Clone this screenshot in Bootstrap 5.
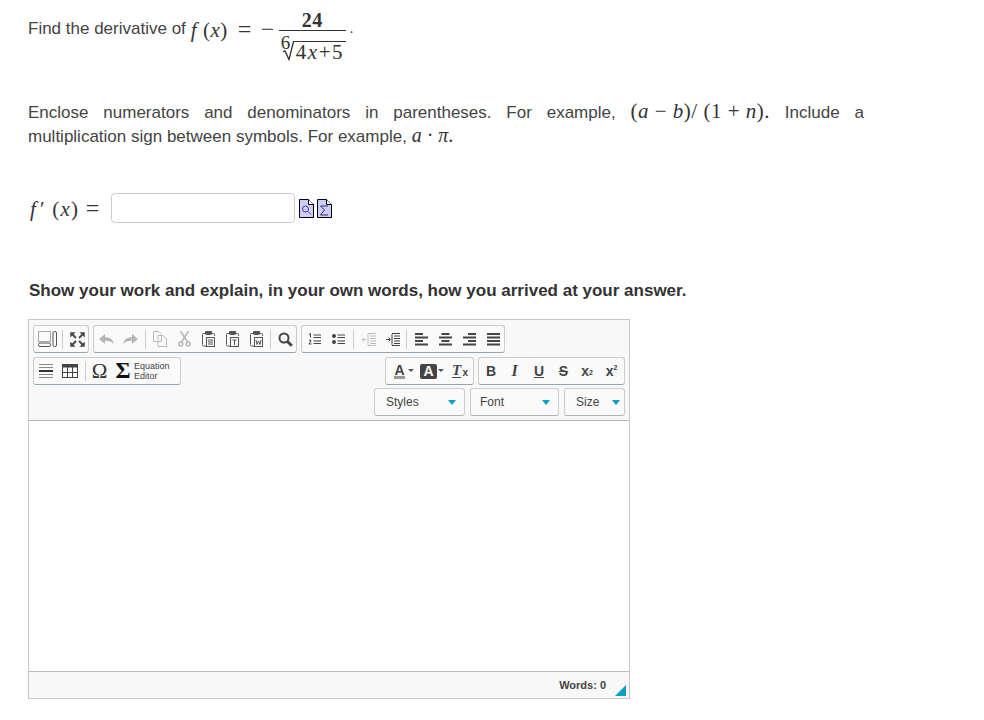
<!DOCTYPE html>
<html lang="en"><head><meta charset="utf-8"><title>Derivative question</title>
<link href="https://cdn.jsdelivr.net/npm/bootstrap@5.3.0/dist/css/bootstrap.min.css" rel="stylesheet">
<style>
html,body{height:720px;overflow:hidden}
body{font-family:"Liberation Sans",Arial,sans-serif;font-size:17px;color:#444;padding:0 0 0 28px;background:#fff}
svg{display:block}
.mth{font-family:"Liberation Serif",serif;font-size:21px;color:#333;white-space:nowrap;line-height:1;letter-spacing:.5px}
.mth i{font-style:italic}
.q-line{padding-top:9px;height:62px}
.q-txt{padding-top:8px;line-height:24px}
.q-math{padding-top:8px;line-height:24px;font-size:21px}
.q-sl{display:inline-block}
.q-f{width:47px;margin-left:5px}
.q-eq{width:23px;font-size:24px}
.q-mi{width:18px;font-size:24px}
.q-frac{width:67px;position:relative}
.q-num{height:22px;line-height:23px;border-bottom:1.5px solid #333;text-align:center;font-weight:bold;font-size:20px}
.q-den{position:relative;height:32px;padding-left:14px;font-size:21px}
.q-den svg{position:absolute;left:0;top:0}
.q-den b{font-weight:normal;position:absolute;left:2px;top:2px;font-size:19px;line-height:1.1}
.q-rad{display:block;position:relative;top:10px;border-top:1px solid #333;line-height:20px;padding-left:3px;letter-spacing:1.5px}
.q-dot{font-size:14px;padding-left:4px}
.q-para{width:836px;margin:39px 0 0;line-height:24px;text-align:justify}
.q-inl{display:inline-block}
.q-sp{font-size:20px;letter-spacing:0}
.q-ans{margin-top:44px;height:30px}
.q-fx{width:71px;letter-spacing:1.2px;padding-left:2px}
.q-fx i:first-child{margin-right:3px}
.q-sym{font-size:24px;line-height:1}
.q-inp{width:184px;height:30px;border:1px solid #ccc;border-radius:4px;margin:0 4px 0 12px;padding:0}
.q-pg{margin-right:3px}
.q-show{font-weight:bold;font-size:17px;color:#333;margin:56px 0 0 1px;line-height:24px}
.ed-box{width:602px;height:380px;margin-top:16px;border:1px solid #c8c8c8;background:#f8f8f8}
.ed-bar{height:101px;padding:5px 4px 0 4px;border-bottom:1px solid #b6b6b6}
.ed-r2{margin-bottom:3px}
.ed-grp{height:28px;border:1px solid #ccc;border-bottom-color:#93a7ae;border-radius:3px;background:#fafafa;flex:none;display:flex;align-items:center}
.ed-btn{width:24px;height:26px;flex:none;color:#444;font-size:14px;font-weight:bold;line-height:26px;display:flex;align-items:center;justify-content:center;position:relative}
.ed-sep{width:1px;height:19px;background:#ccc;flex:none;margin:0 3px}
.ed-m22{margin:0 2px}.ed-m32{margin:0 2px 0 3px}.ed-m12{margin:0 2px 0 1px}
.g56{width:56px}.g204{width:204px}.g148{width:148px}.g89{width:89px}.g147{width:147px}
.b23{width:23px}.b25{width:25px}.b26{width:26px}.b27{width:27px;margin-left:4px}.b30{width:30px}
.ed-om{font-family:"Liberation Serif",serif;font-size:21px;font-weight:normal;color:#333}
.ed-si{font-family:"Liberation Serif",serif;font-size:23px;font-weight:bold;color:#111;margin-right:-1px}
.ed-eq{font-size:9px;line-height:10px;font-weight:normal;color:#444;width:46px;padding-left:1px;display:block;height:auto;text-align:left;margin-left:-1px;margin-top:-1px}
.ed-a{border-bottom:3px solid #999;line-height:12px;margin-right:8px}
.ed-ab{background:#444;color:#fff;border-radius:2px;padding:0 3px;line-height:15px;margin-right:7px}
.ed-tc{font-family:"Liberation Serif",serif;font-style:italic;font-size:15px;border-bottom:1px solid #444;line-height:13px;margin-right:5px}
.ed-x{position:absolute;font-size:10px;top:9px;right:3px;line-height:12px}
.ed-car{position:absolute;width:0;height:0;border-left:3px solid transparent;border-right:3px solid transparent;border-top:3px solid #555;top:11px;right:3px}
.ed-i{font-family:"Liberation Serif",serif;font-style:italic;font-size:16px}
.ed-sb{font-size:7px;line-height:0}
.ed-combo{height:28px;border:1px solid #ccc;border-bottom-color:#a9b4b8;border-radius:3px;background:#fafafa;font-size:12px;color:#444;padding-left:11px;padding-right:4px;flex:none}
.ed-combos{gap:5px}
.c91{width:91px}.c89{width:89px;padding-left:9px}.c61{width:61px}
.ed-caret{width:0;height:0;border-left:4.5px solid transparent;border-right:4.5px solid transparent;border-top:5px solid #0a9ec9}
.ed-body{height:251px;background:#fff;border-bottom:1px solid #bdbdbd}
.ed-foot{height:27px;font-size:11px;font-weight:bold;color:#444;padding:0 3px 1px 0}
.ed-grip{width:0;height:0;border-left:11px solid transparent;border-bottom:11px solid #0a9ec9;margin-left:9px;margin-top:11px}
</style></head><body>

<div class="q-line d-flex align-items-start">
  <div class="q-txt">Find the derivative of</div>
  <div class="q-math mth"><span class="q-sl q-f"><i>f</i> (<i>x</i>)</span><span class="q-sl q-eq">=</span><span class="q-sl q-mi">−</span></div>
  <div class="q-frac mth">
    <div class="q-num">24</div>
    <div class="q-den"><svg width="20" height="32" viewBox="0 0 20 32"><path d="M4 21l2-1 4 8.500L14.500 10.500" fill="none" stroke="#333" stroke-width="1.300"/></svg><b>6</b><span class="q-rad">4<i>x</i>+5</span></div>
  </div>
  <div class="q-math mth q-dot">.</div>
</div>

<p class="q-para">Enclose numerators and denominators in parentheses. For example, <span class="mth q-inl">(<i>a</i> − <i>b</i>)/ (1 + <i>n</i>).</span> Include a multiplication sign between symbols. For example, <span class="mth q-inl q-sp"><i>a</i> · <i>π</i>.</span></p>

<div class="q-ans d-flex align-items-center">
  <div class="mth q-fx"><i>f</i>′ (<i>x</i>)&nbsp;<span class="q-sym">=</span></div>
  <input class="q-inp" type="text" aria-label="answer">
  <svg class="q-pg" width="15" height="19" viewBox="0 0 15 19"><path d="M.5.500h9l5 5v13H.5z" fill="#ccf" stroke="#000"/><path d="M9.500.500v5h5" fill="#fff" stroke="#000"/><circle cx="6.500" cy="10" r="3" fill="none" stroke="#446"/><path d="M9 12.500l3 3" stroke="#446"/></svg>
  <svg width="15" height="19" viewBox="0 0 15 19"><path d="M.5.500h9l5 5v13H.5z" fill="#ccf" stroke="#000"/><path d="M9.500.500v5h5" fill="#fff" stroke="#000"/><path d="M11 7H3.500l4 4-4 5H11" fill="none" stroke="#335"/></svg>
</div>

<div class="q-show">Show your work and explain, in your own words, how you arrived at your answer.</div>

<div class="ed-box">
  <div class="ed-bar">
    <div class="d-flex gap-1 mb-1">
      <div class="ed-grp g56">
        <div class="ed-btn b26"><svg width="21" height="18" viewBox="0 0 21 18" fill="none" stroke="#555"><rect x="1.500" y="1.500" width="12" height="10" stroke-dasharray="1 1"/><rect x="1.500" y="13" width="12" height="3.500" rx="1.500"/><rect x="16" y="1.500" width="3.500" height="15" rx="1.500"/></svg></div>
        <div class="ed-sep ed-m22"></div>
        <div class="ed-btn"><svg width="15" height="15" viewBox="0 0 15 15" fill="#444" stroke="#444"><path d="M.5.500h4.500L.5 5zM14.500.500V5L10 .500zM.5 14.500V10L5 14.500zM14.500 14.500H10L14.500 10z" stroke-width=".5"/><path d="M2 2l4 4M13 2L9 6M2 13l4-4M13 13L9 9" stroke-width="1.800"/></svg></div>
      </div>
      <div class="ed-grp g204">
        <div class="ed-btn"><svg width="15" height="11" viewBox="0 0 15 11" fill="#b5b5b5"><path d="M6 0v3.200c5 0 8 2.300 9 7.300-2-3-4.500-3.800-9-3.800V10L0 5z"/></svg></div>
        <div class="ed-btn"><svg width="15" height="11" viewBox="0 0 15 11" fill="#b5b5b5"><path d="M9 0v3.200c-5 0-8 2.300-9 7.300 2-3 4.500-3.800 9-3.800V10l6-5z"/></svg></div>
        <div class="ed-sep ed-m32"></div>
        <div class="ed-btn"><svg width="14" height="16" viewBox="0 0 14 16" fill="none" stroke="#bbb"><path d="M.5.500h5l3 3v7H.5zM5 4.500h5l3.500 3.500v7.500H5z" fill="#fafafa"/></svg></div>
        <div class="ed-btn"><svg width="13" height="16" viewBox="0 0 13 16" fill="none" stroke="#b5b5b5" stroke-width="1.500"><path d="M2.500 0l7 11M10.500 0l-7 11"/><circle cx="2.800" cy="13" r="2"/><circle cx="10.200" cy="13" r="2"/></svg></div>
        <div class="ed-btn"><svg width="13" height="16" viewBox="0 0 13 16" fill="none" stroke="#555"><path d="M4 2.500H1.500q-1 0-1 1v10q0 1.500 1 1.500H4"/><path d="M9 2.500h2.500q1 0 1 1V5"/><rect x="3.500" y="0" width="6" height="3.500" fill="#555" rx="1"/><rect x="4.500" y="6.500" width="8" height="9"/><path d="M6 9h5M6 11h5M6 13h5"/></svg></div>
        <div class="ed-btn"><svg width="13" height="16" viewBox="0 0 13 16" fill="none" stroke="#555"><path d="M4 2.500H1.500q-1 0-1 1v10q0 1.500 1 1.500H4"/><path d="M9 2.500h2.500q1 0 1 1V5"/><rect x="3.500" y="0" width="6" height="3.500" fill="#555" rx="1"/><rect x="4.500" y="6.500" width="8" height="9"/><path d="M6.500 9h4M8.500 9v5"/></svg></div>
        <div class="ed-btn"><svg width="13" height="16" viewBox="0 0 13 16" fill="none" stroke="#555"><path d="M4 2.500H1.500q-1 0-1 1v10q0 1.500 1 1.500H4"/><path d="M9 2.500h2.500q1 0 1 1V5"/><rect x="3.500" y="0" width="6" height="3.500" fill="#555" rx="1"/><rect x="4.500" y="6.500" width="8" height="9"/><path d="M6 9l1 4.500L8.500 10l1.500 3.500L11 9"/></svg></div>
        <div class="ed-sep ed-m22"></div>
        <div class="ed-btn"><svg width="15" height="15" viewBox="0 0 15 15" fill="none" stroke="#444"><circle cx="6" cy="6" r="4.500" stroke-width="2"/><path d="M9.500 9.500l4.300 4.300" stroke-width="3"/></svg></div>
      </div>
      <div class="ed-grp g204">
        <div class="ed-btn"><svg width="13" height="12" viewBox="0 0 13 12" fill="none" stroke="#444"><path d="M1 1.500l1.500-1v4M1 7.500q2-1.500 2 .5l-2 3h2.500M5.500 2h7.500M5.500 4.500h7.500M5.500 8h7.500M5.500 10.500h7.500"/></svg></div>
        <div class="ed-btn"><svg width="13" height="12" viewBox="0 0 13 12" fill="#444"><circle cx="2" cy="3" r="2"/><circle cx="2" cy="9" r="2"/><path d="M5.500 1.500h7.500v1H5.500zM5.500 4h7.500v1H5.500zM5.500 7.500h7.500v1H5.500zM5.500 10h7.500v1H5.500z"/></svg></div>
        <div class="ed-sep"></div>
        <div class="ed-btn"><svg width="14" height="13" viewBox="0 0 14 13" fill="none" stroke="#bbb"><path d="M6 .5h8M8 3h6M8 5.500h6M8 8h6M8 10.500h6M6 12.500h8M6 1v11"/><path d="M0 6.500h4M2 4.500l-2 2 2 2"/></svg></div>
        <div class="ed-btn"><svg width="14" height="13" viewBox="0 0 14 13" fill="none" stroke="#444"><path d="M6 .5h8M8 3h6M8 5.500h6M8 8h6M8 10.500h6M6 12.500h8M6 1v11"/><path d="M0 6.500h4M2.500 4.500l2 2-2 2"/></svg></div>
        <div class="ed-sep ed-m12"></div>
        <div class="ed-btn"><svg width="13" height="13" viewBox="0 0 13 13" fill="#444"><path d="M0 0h8v2H0zM0 3.500h13v2H0zM0 7h8v2H0zM0 10.500h13v2H0z"/></svg></div>
        <div class="ed-btn"><svg width="13" height="13" viewBox="0 0 13 13" fill="#444"><path d="M2.500 0h8v2h-8zM0 3.500h13v2H0zM2.500 7h8v2h-8zM0 10.500h13v2H0z"/></svg></div>
        <div class="ed-btn"><svg width="13" height="13" viewBox="0 0 13 13" fill="#444"><path d="M5 0h8v2H5zM0 3.500h13v2H0zM5 7h8v2H5zM0 10.500h13v2H0z"/></svg></div>
        <div class="ed-btn"><svg width="13" height="13" viewBox="0 0 13 13" fill="#444"><path d="M0 0h13v2H0zM0 3.500h13v2H0zM0 7h13v2H0zM0 10.500h13v2H0z"/></svg></div>
      </div>
    </div>
    <div class="d-flex justify-content-between ed-r2">
      <div class="ed-grp g148">
        <div class="ed-btn"><svg width="14" height="16" viewBox="0 0 14 16" fill="#888"><path d="M0 1h14v1H0zM0 4h14v1H0zM0 11h14v1H0zM0 14h14v1H0z"/><path d="M0 7h14v2H0z" fill="#333"/></svg></div>
        <div class="ed-btn"><svg width="16" height="14" viewBox="0 0 16 14" fill="none" stroke="#444"><rect x=".5" y=".5" width="15" height="13"/><path d="M0 2h16" stroke-width="3"/><path d="M5.500 3v11M10.500 3v11M0 8.500h16"/></svg></div>
        <div class="ed-sep ed-m32"></div>
        <div class="ed-btn b23 ed-om">Ω</div>
        <div class="ed-btn ed-si">Σ</div>
        <div class="ed-btn ed-eq">Equation<br>Editor</div>
      </div>
      <div class="d-flex gap-1">
        <div class="ed-grp g89">
          <div class="ed-btn b27"><span class="ed-a">A</span><span class="ed-car"></span></div>
          <div class="ed-btn b30"><span class="ed-ab">A</span><span class="ed-car"></span></div>
          <div class="ed-btn"><span class="ed-tc">T</span><span class="ed-x">x</span></div>
        </div>
        <div class="ed-grp g147">
          <div class="ed-btn">B</div>
          <div class="ed-btn b23 ed-i">I</div>
          <div class="ed-btn b26"><span class="text-decoration-underline">U</span></div>
          <div class="ed-btn b23"><span class="text-decoration-line-through">S</span></div>
          <div class="ed-btn">x<sub class="ed-sb">2</sub></div>
          <div class="ed-btn b25">x<sup class="ed-sb">2</sup></div>
        </div>
      </div>
    </div>
    <div class="d-flex justify-content-end ed-combos">
      <div class="ed-combo c91 d-flex align-items-center justify-content-between"><span>Styles</span><span class="ed-caret me-1"></span></div>
      <div class="ed-combo c89 d-flex align-items-center justify-content-between"><span>Font</span><span class="ed-caret me-1"></span></div>
      <div class="ed-combo c61 d-flex align-items-center justify-content-between"><span>Size</span><span class="ed-caret"></span></div>
    </div>
  </div>
  <div class="ed-body"></div>
  <div class="ed-foot d-flex align-items-center justify-content-end"><span>Words: 0</span><span class="ed-grip"></span></div>
</div>
</body></html>
